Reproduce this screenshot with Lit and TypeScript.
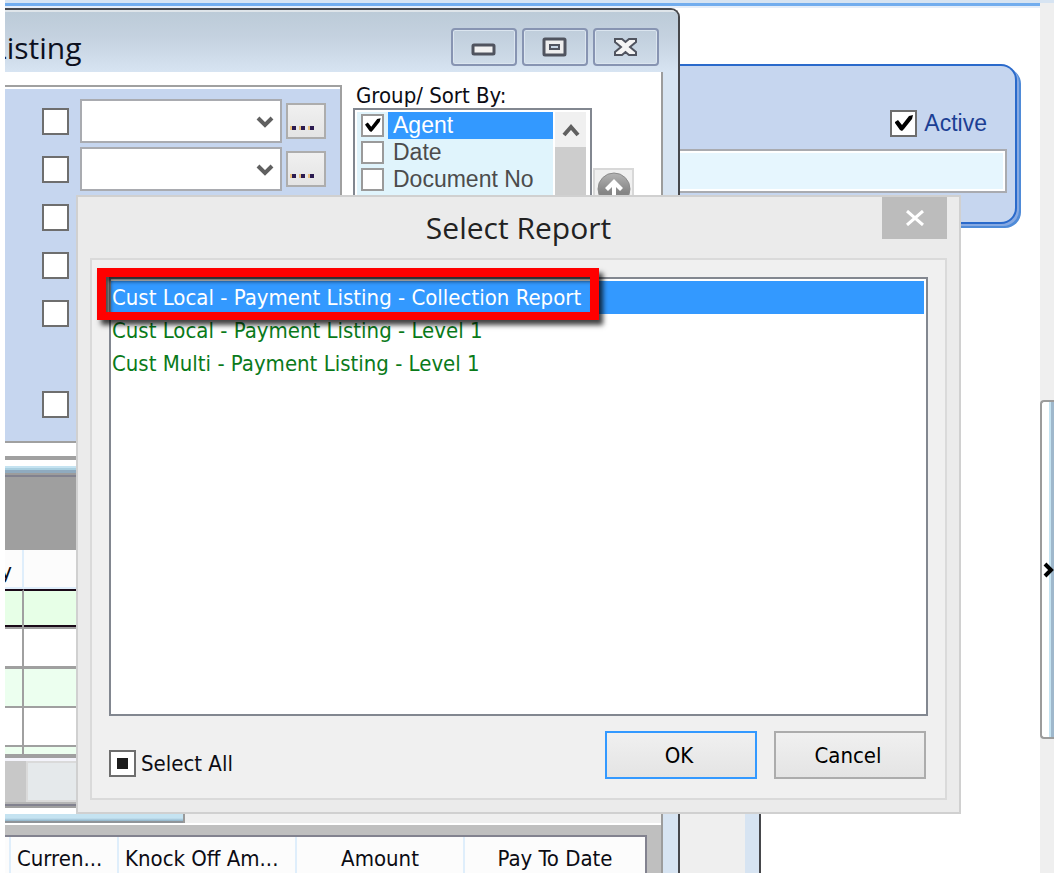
import { LitElement, html, css, svg, nothing } from "lit";
import { customElement, property } from "lit/decorators.js";

@customElement("tick-box")
class TickBox extends LitElement {
  @property() label = "";
  @property() name = "";
  @property({ type: Boolean }) checked = false;
  @property({ type: Boolean }) mixed = false;

  static styles = css`
    :host { display: block; }
    .wrap { display: flex; align-items: center; gap: var(--tick-gap, 5px); }
    .box { display: grid; flex: none; width: var(--tick-size, 27px); height: var(--tick-size, 27px); }
    .box > * { grid-area: 1 / 1; }
    input {
      appearance: none; margin: 0; width: 100%; height: 100%; box-sizing: border-box;
      border: 2px solid var(--tick-border, #6e6e6e); background: #fff; border-radius: 0;
    }
    svg { width: 100%; height: 100%; pointer-events: none; }
    .text { flex: 1; white-space: nowrap; line-height: 27px; padding-left: var(--text-pad, 0); background: var(--text-bg, transparent); color: var(--text-color, inherit); }
  `;

  render() {
    return html`<label class="wrap">
      <span class="box">
        <input type="checkbox" aria-label=${this.label ? nothing : this.name} .checked=${this.checked} .indeterminate=${this.mixed} />
        <svg viewBox="0 0 27 27">
          ${this.checked ? svg`<path d="M5 12l3-2 4 5L19 6l4-1-1 4-8 10-2 2-2-1-5-7z" fill="#000" />` : nothing}
          ${this.mixed ? svg`<path d="M8 8h11v11H8z" fill="#1c1c1c" />` : nothing}
        </svg>
      </span>
      ${this.label ? html`<span class="text">${this.label}</span>` : nothing}
    </label>`;
  }
}

@customElement("listing-window")
class ListingWindow extends LitElement {
  static styles = css`
    :host { display: block; }
    .window {
      display: flex; flex-direction: column; height: 100%; box-sizing: border-box;
      border: 2px solid #46474b; border-left: 0; border-bottom: 0; border-top-right-radius: 9px;
      background: #d7e4f2; box-shadow: inset 0 2px #e4e9ee; overflow: hidden;
    }
    .title {
      display: flex; align-items: center; height: 62px; padding-right: 19px; flex: none;
      background: linear-gradient(#dfe5ea 2px, #bccbd8 2px, #c5d2e0 45%, #d7e4f2);
    }
    h1 { flex: 1; margin: 0; padding-top: 14px; font: 400 30px/36px "Open Sans", sans-serif; text-indent: -14px; color: #0c1020; }
    .controls { display: flex; gap: 5px; padding-top: 12px; }
    .controls button {
      width: 66px; height: 38px; padding: 0; display: grid; place-items: center;
      border: 2px solid #8794b2; border-radius: 4px; background: linear-gradient(#bfcddb, #cfdce9);
      box-shadow: inset 0 0 0 1px #dbe5ef;
    }
    .client {
      flex: 1; min-height: 0; display: flex; flex-direction: column; margin-right: 15px;
      background: #fff; border-right: 2px solid #9c9c9c;
    }
    .filters { display: flex; height: 371px; flex: none; align-items: flex-start; }
    .params {
      width: 337px; height: 358px; margin-top: 13px; box-sizing: border-box;
      border: 2px solid #a0a0a0; border-left: 0; box-shadow: inset 0 2px #fff; background: #c6d6ef;
      background-clip: padding-box; padding: 12px 0 0 37px;
    }
    .line { display: flex; align-items: center; height: 44px; margin-bottom: 4px; }
    .line.gap { margin-top: 47px; }
    .combo { display: grid; width: 202px; margin-left: 11px; }
    .combo > * { grid-area: 1 / 1; }
    .combo select { appearance: none; height: 44px; border: 2px solid #a9abb0; background: #fff; border-radius: 0; padding: 0; }
    .combo svg { justify-self: end; align-self: center; margin: 3px 8px 0 0; pointer-events: none; }
    .more {
      width: 40px; height: 36px; margin-left: 4px; padding: 0 0 0 4px; border: 2px solid #adadad;
      background: linear-gradient(#f0f0f0, #e4e4e4); display: flex; align-items: flex-end; gap: 5px;
    }
    .more i { width: 4px; height: 4px; margin-bottom: 7px; background: #2a1a50; box-shadow: -2px 0 #eac080; }
    .sort { padding: 11px 0 0 11px; width: 239px; }
    .sort h2 { margin: 0 0 0 3px; font-weight: 400; font-size: 22px; line-height: 25px; }
    .sortlist { display: flex; border: 2px solid #828790; padding: 2px; height: 170px; background: #fff; }
    .items { flex: 1; background: #e0f4fc; font-family: "Liberation Sans", sans-serif; font-size: 23px; color: #4c4c4c; padding-left: 4px; }
    .items tick-box { --tick-size: 23px; --tick-gap: 4px; --tick-border: #9a9a9a; --text-pad: 5px; }
    .items tick-box.on { --text-bg: #3399ff; --text-color: #fff; }
    .scroll { width: 31px; margin: 0 2px; background: linear-gradient(#f0f0f0 35px, #cdcdcd 35px); text-align: center; }
    .scroll svg { display: block; margin: 11px auto 0; }
    .up { width: 41px; height: 41px; margin: 96px 0 0 1px; padding: 0; border: 2px solid #d8d8d8; background: #f0f0f0; display: grid; place-items: center; }
    .up svg { display: block; }
    .rule { height: 4px; margin: 13px 0 6px; background: #a0a0a0; flex: none; }
    .edge { height: 9px; flex: none; background: linear-gradient(#c5e3f1 0 2px, #a9cfe0 2px 4px, #8faabf 4px 7px, #9c9c9c 7px); }
    .band { height: 73px; flex: none; border-top: 2px solid #82828f; background: #9f9f9f; }
    table { border-collapse: separate; border-spacing: 0; table-layout: fixed; width: 100%; flex: none; }
    .grid td, .grid th { box-sizing: border-box; padding: 0; border-right: 2px solid #a0a0a0; border-bottom: 2px solid #a0a0a0; }
    .grid th { height: 39px; font-weight: 400; font-size: 22px; border-color: #dfeefb; background: #fcfcfc; overflow: hidden; }
    .grid th span { display: flex; justify-content: flex-end; padding: 7px 10px 0 0; line-height: 26px; }
    .grid .first { width: 19px; }
    .grid td { height: 39px; }
    .grid .current td { height: 40px; background: #e7ffe7; border-top: 2px solid #1a0a18; box-shadow: inset 0 -2px #1a0a18; }
    .grid .alt td { background: #ecffef; border-top: 1px solid #a0a0a0; height: 40px; }
    .grid .cut td { height: 7px; border-bottom: 0; background: #ecffef; }
    .bar { flex: none; height: 41px; margin-top: 4px; border-top: 3px solid #f4f4fb; box-shadow: 0 -4px #a0a0a0; background: #c8c8c8; display: flex; }
    .thumb { flex: 1; margin-left: 21px; border: 2px solid #dadada; background: #e5e9eb; }
    .base { height: 6px; flex: none; background: linear-gradient(#b5b5b5 0 2px, #82828f 2px 4px, #a0a0a0 4px); }
    .splitter { flex: none; height: 9px; margin-top: 6px; background: #efefef; }
    .handle { width: 180px; height: 9px; background: linear-gradient(#c5e3f1 0 4px, #8fb2c8 7px, #8f9499 7px); border-right: 2px solid #9a9a9a; box-sizing: border-box; }
    .detail { flex: 1; min-height: 0; margin-top: 2px; padding: 10px 14px 0 0; background: #bfbfbf; }
    .detail table { border: 2px solid #82828f; border-left: 0; background: #fcfcfc; }
    .detail th { padding: 0 0 4px; height: 48px; line-height: 40px; box-sizing: border-box; font-weight: 400; font-size: 22px; border-right: 2px solid #dfeefb; white-space: nowrap; overflow: hidden; }
    .detail th:last-child { border-right: 0; }
    .detail th.left { text-align: left; padding-left: 6px; }
  `;

  private filterRow(name: string, combo: boolean, gap = false) {
    return html`<div class="line ${gap ? "gap" : ""}">
      <tick-box name=${name}></tick-box>
      ${combo
        ? html`<span class="combo">
              <select aria-label=${name}><option></option></select>
              <svg width="18" height="14" viewBox="0 0 18 14"><path d="M2 2l7 7 7-7" fill="none" stroke="#606060" stroke-width="4" /></svg>
            </span>
            <button class="more" aria-label="Browse"><i></i><i></i><i></i></button>`
        : nothing}
    </div>`;
  }

  render() {
    return html`<section class="window">
      <header class="title">
        <h1>Listing</h1>
        <div class="controls">
          <button aria-label="Minimize"><svg width="26" height="20" viewBox="0 0 26 20"><rect x="2" y="8" width="21" height="9" rx="1" fill="#f2f2f2" stroke="#50545f" stroke-width="3" /></svg></button>
          <button aria-label="Restore"><svg width="26" height="20" viewBox="0 0 26 20"><rect x="2" y="2" width="21" height="16" rx="1" fill="#eee" stroke="#50545f" stroke-width="3" /><rect x="8" y="8" width="9" height="4" fill="#c8d5e3" stroke="#50545f" stroke-width="2" /></svg></button>
          <button aria-label="Close"><svg width="26" height="20" viewBox="0 0 26 20"><path d="M2 2h7l3.500 3L16 2h7v3l-6 5 6 5v3h-7l-3.500-3L9 18H2v-3l6-5L2 5z" fill="#f4f4f4" stroke="#50545f" stroke-width="2" /></svg></button>
        </div>
      </header>
      <div class="client">
        <div class="filters">
          <div class="params">
            ${this.filterRow("Filter 1", true)} ${this.filterRow("Filter 2", true)} ${this.filterRow("Filter 3", false)}
            ${this.filterRow("Filter 4", false)} ${this.filterRow("Filter 5", false)} ${this.filterRow("Filter 6", false, true)}
          </div>
          <div class="sort">
            <h2>Group/ Sort By:</h2>
            <div class="sortlist">
              <div class="items">
                <tick-box class="on" label="Agent" checked></tick-box>
                <tick-box label="Date"></tick-box>
                <tick-box label="Document No"></tick-box>
              </div>
              <div class="scroll"><svg width="18" height="15" viewBox="0 0 18 15"><path d="M2 12l7-8 7 8" fill="none" stroke="#606060" stroke-width="4" /></svg></div>
            </div>
          </div>
          <button class="up" aria-label="Move up"><svg width="34" height="34" viewBox="0 0 34 34">
            <defs><linearGradient id="g" x1="0" y1="0" x2="0" y2="1"><stop offset="0" stop-color="#b4b4b4" /><stop offset=".6" stop-color="#858585" /></linearGradient></defs>
            <circle cx="17" cy="17" r="16" fill="url(#g)" stroke="#8a8a8a" /><path d="M17 7l9 9-3 3-4-4v12h-4V15l-4 4-3-3z" fill="#fff" /></svg></button>
        </div>
        <div class="rule"></div>
        <div class="edge"></div>
        <div class="band"></div>
        <table class="grid">
          <thead><tr><th class="first"><span>y</span></th><th></th></tr></thead>
          <tbody>
            <tr class="current"><td></td><td></td></tr>
            <tr><td></td><td></td></tr>
            <tr class="alt"><td></td><td></td></tr>
            <tr><td></td><td></td></tr>
            <tr class="cut"><td></td><td></td></tr>
          </tbody>
        </table>
        <div class="bar"><div class="thumb"></div></div>
        <div class="base"></div>
        <div class="splitter"><div class="handle"></div></div>
        <div class="detail">
          <table>
            <colgroup><col width="6" /><col width="108" /><col width="178" /><col width="168" /><col /></colgroup>
            <thead><tr><th></th><th class="left">Curren...</th><th class="left">Knock Off Am...</th><th>Amount</th><th>Pay To Date</th></tr></thead>
          </table>
        </div>
      </div>
    </section>`;
  }
}

@customElement("report-dialog")
class ReportDialog extends LitElement {
  static styles = css`
    :host { display: block; }
    .dialog { border: 2px solid #d0d0d0; background: #ebebeb; padding: 0 12px 12px; }
    header { display: grid; height: 61px; }
    header > * { grid-area: 1 / 1; }
    h1 { margin: 0; text-align: center; font: 400 30px/62px "Open Sans", sans-serif; color: #222; }
    .close { justify-self: end; width: 65px; height: 42px; border: 0; padding: 0; background: #bcbcbc; display: grid; place-items: center; }
    .body { border: 2px solid #dadada; background: #f0f0f0; padding: 17px 17px 19px; }
    .list { position: relative; margin: 0; padding: 2px 2px 0 0; height: 433px; list-style: none; border: 2px solid #828790; background: #fff; color: #0a7a1a; }
    .list li { line-height: 33px; padding-left: 1px; white-space: nowrap; }
    .list li.on { background: #3399ff; color: #fff; }
    .mark {
      position: absolute; left: -14px; top: -11px; width: 483px; height: 35px;
      border: 9px solid #f00; border-bottom-width: 8px; pointer-events: none;
      box-shadow: 4px 5px 5px rgba(0, 0, 0, .75), inset 4px 4px 4px rgba(0, 0, 0, .7);
    }
    footer { display: flex; gap: 17px; align-items: center; padding-top: 15px; padding-right: 2px; }
    tick-box { flex: 1; padding-top: 17px; }
    footer button { width: 152px; height: 48px; padding: 0 4px 0 0; font: inherit; color: #000; border: 2px solid #acacac; background: linear-gradient(#f0f0f0, #e4e4e4); }
    footer button.default { border-color: #3399ff; }
  `;

  reports = ["Cust Local - Payment Listing - Collection Report", "Cust Local - Payment Listing - Level 1", "Cust Multi - Payment Listing - Level 1"];

  render() {
    return html`<section class="dialog" role="dialog" aria-label="Select Report">
      <header>
        <h1>Select Report</h1>
        <button class="close" aria-label="Close"><svg width="18" height="16" viewBox="0 0 18 16"><path d="M1 1l16 14M17 1L1 15" stroke="#fff" stroke-width="3" /></svg></button>
      </header>
      <div class="body">
        <ul class="list" role="listbox">
          ${this.reports.map((r, i) => html`<li class=${i ? "" : "on"} role="option" aria-selected=${i === 0}>${r}</li>`)}
          <li class="mark" role="presentation"></li>
        </ul>
        <footer>
          <tick-box label="Select All" mixed></tick-box>
          <button class="default">OK</button>
          <button>Cancel</button>
        </footer>
      </div>
    </section>`;
  }
}

@customElement("app-root")
class AppRoot extends LitElement {
  static styles = css`
    :host { display: block; height: 100vh; overflow: hidden; background: #fff; padding-left: 5px; box-sizing: border-box; font: 22px "DejaVu Sans Condensed", "DejaVu Sans", sans-serif; font-stretch: condensed; color: #0c0c14; }
    .shell { display: flex; flex-direction: column; height: 100%; }
    .strip { height: 3px; background: #d7e4f2; flex: none; }
    .area { flex: 1; display: flex; min-height: 0; }
    .desk { position: relative; flex: 1; overflow: hidden; border-top: 3px solid #72adee; box-shadow: inset 0 2px #e6eef9; }
    .card {
      margin: 58px 23px 0 0; height: 160px; box-sizing: border-box; border: 2px solid #2a6acb; border-left: 0;
      border-radius: 0 16px 16px 0; background: #c6d6ef; box-shadow: 2px 2px #86a9e2, 4px 4px #4f8bd8;
      display: flex; flex-direction: column; align-items: flex-end; padding: 44px 8px 0 0;
    }
    .card tick-box { margin-right: 20px; font: 23px "Liberation Sans", sans-serif; --tick-gap: 7px; color: #1c3f94; }
    .card input { width: 100%; height: 44px; margin-top: 12px; box-sizing: border-box; border: 2px solid #a9abb0; background: #e6f6fe; box-shadow: inset 0 0 0 2px #fff; }
    .back { position: absolute; left: 600px; top: 300px; bottom: 0; width: 156px; box-sizing: border-box; background: #efefef; border-right: 2px solid #46474b; box-shadow: inset -14px 0 #d7e4f2; }
    .front { position: absolute; left: 0; top: 2px; bottom: 0; width: 675px; }
    .dialog { position: absolute; left: 71px; top: 189px; width: 885px; }
    .side { width: 14px; background: #efefef; }
    .pull { width: 14px; height: 339px; margin-top: 397px; padding: 0; display: grid; place-items: center end; border: 2px solid #9c9c9c; border-right: 0; border-radius: 4px 0 0 4px; background: linear-gradient(90deg, #fff 7px, #c5e3f1 7px 9px, #9fb8cc 9px); }
  `;

  render() {
    return html`<div class="shell">
      <div class="strip"></div>
      <div class="area">
        <main class="desk">
          <div class="card">
            <tick-box label="Active" checked></tick-box>
            <input type="text" aria-label="Description" />
          </div>
          <div class="back"></div>
          <listing-window class="front"></listing-window>
          <report-dialog class="dialog"></report-dialog>
        </main>
        <aside class="side">
          <button class="pull" aria-label="Expand panel"><svg width="11" height="16" viewBox="0 0 11 16"><path d="M2 2l6 6-6 6" fill="none" stroke="#000" stroke-width="4" /></svg></button>
        </aside>
      </div>
    </div>`;
  }
}
